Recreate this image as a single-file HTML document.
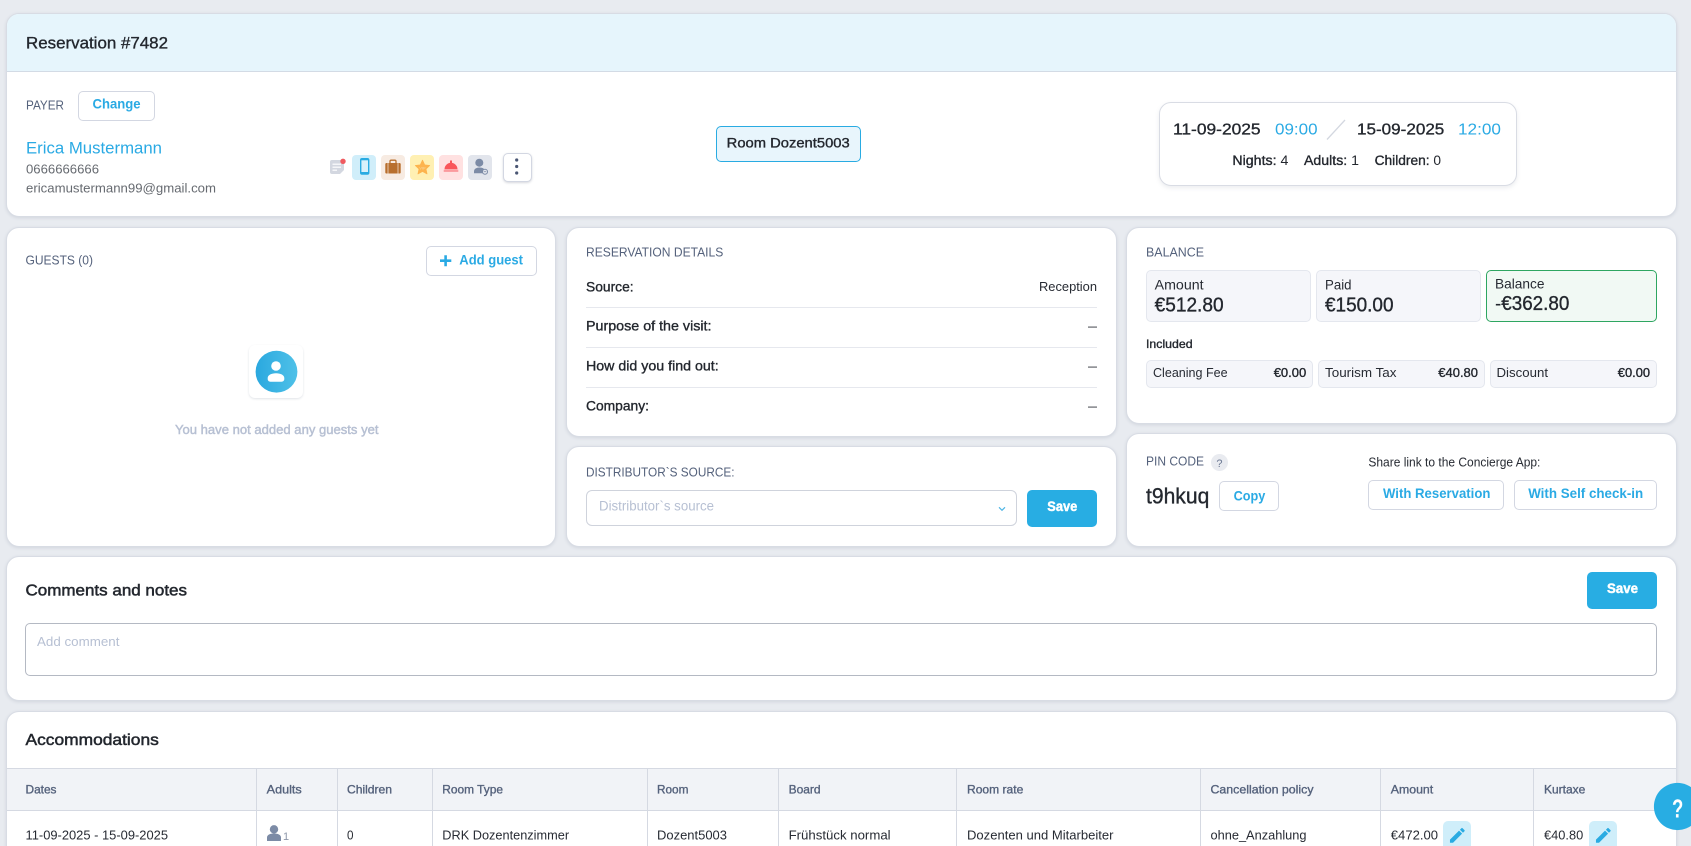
<!DOCTYPE html>
<html lang="en">
<head>
<meta charset="utf-8">
<title>Reservation #7482</title>
<style>
html,body{margin:0;padding:0;width:1691px;height:846px;overflow:hidden;background:#e8ebf0}
body{position:relative;font-family:"Liberation Sans",sans-serif}
.a{position:absolute;box-sizing:border-box}
.card{background:#fff;border:1px solid #d8dce4;border-radius:13px;box-shadow:0 1px 3px rgba(120,130,150,.2)}
.btn{background:#fff;border:1px solid #d3d7e2;border-radius:5px}
.save{background:#28ade3;border-radius:5px}
.stat{background:#f5f6fa;border:1px solid #e4e7ee;border-radius:5px}
.line{background:#e6e8ee;height:1px}
.tile{border-radius:4px}
svg{position:absolute;left:0;top:0}
text{font-family:"Liberation Sans",sans-serif}
.d{fill:#272b33}.dm{fill:#23272e;stroke:#23272e;stroke-width:.35}
.g{fill:#55627c}.gm{fill:#55627c;stroke:#55627c;stroke-width:.35}
.k{fill:#666a70}
.b{fill:#2aaae4}.bm{fill:#2aaae4;stroke:#2aaae4;stroke-width:.45}
.p{fill:#b7c0d3}.pm{fill:#b7c0d3;stroke:#b7c0d3;stroke-width:.45}
.w{fill:#fff;stroke:#fff;stroke-width:.45}
.r{stroke:none;font-weight:400}
</style>
</head>
<body>
<!-- header card -->
<div class="a card" style="left:6px;top:13px;width:1671px;height:204px;overflow:hidden">
  <div class="a" style="left:0;top:0;right:0;height:58px;background:#e6f5fc;border-bottom:1px solid #d3dbe5"></div>
</div>
<div class="a btn" style="left:78px;top:91px;width:77px;height:30px"></div>
<div class="a tile" style="left:352px;top:154.5px;width:24px;height:25px;background:#d0eefa"></div>
<div class="a tile" style="left:381px;top:154.5px;width:24px;height:25px;background:#f7ebe2"></div>
<div class="a tile" style="left:410px;top:154.5px;width:24px;height:25px;background:#fff0b3"></div>
<div class="a tile" style="left:439px;top:154.5px;width:24px;height:25px;background:#ffe1e1"></div>
<div class="a tile" style="left:468px;top:154.5px;width:24px;height:25px;background:#e2e5ec"></div>
<div class="a btn" style="left:502.5px;top:152.5px;width:29px;height:29px;box-shadow:0 1px 2px rgba(90,100,120,.25)"></div>
<div class="a" style="left:716px;top:126px;width:145px;height:36px;background:#e8f5fc;border:1px solid #29abe2;border-radius:5px"></div>
<div class="a" style="left:1158.5px;top:102px;width:358px;height:84px;background:#fff;border:1px solid #d9dce4;border-radius:12px;box-shadow:0 2px 4px rgba(120,130,150,.14)"></div>

<!-- guests -->
<div class="a card" style="left:6px;top:227px;width:550px;height:320px"></div>
<div class="a btn" style="left:426px;top:246px;width:111px;height:30px"></div>
<div class="a" style="left:249px;top:345px;width:54px;height:53px;background:#fff;border-radius:6px;box-shadow:0 1px 2px rgba(120,130,150,.22)"></div>

<!-- details -->
<div class="a card" style="left:566px;top:227px;width:551px;height:210px"></div>
<div class="a line" style="left:586px;top:307px;width:511px"></div>
<div class="a line" style="left:586px;top:347px;width:511px"></div>
<div class="a line" style="left:586px;top:387px;width:511px"></div>

<!-- distributor -->
<div class="a card" style="left:566px;top:446px;width:551px;height:101px"></div>
<div class="a" style="left:586px;top:490px;width:431px;height:36px;background:#fff;border:1px solid #cfd3dc;border-radius:6px"></div>
<div class="a save" style="left:1027px;top:490px;width:70px;height:37px"></div>

<!-- balance -->
<div class="a card" style="left:1126px;top:227px;width:551px;height:197px"></div>
<div class="a stat" style="left:1146px;top:270px;width:165px;height:52px"></div>
<div class="a stat" style="left:1316px;top:270px;width:165px;height:52px"></div>
<div class="a" style="left:1486px;top:270px;width:171px;height:52px;background:#f1f9f4;border:1px solid #2ea661;border-radius:5px"></div>
<div class="a stat" style="left:1146px;top:360px;width:167px;height:28px"></div>
<div class="a stat" style="left:1318px;top:360px;width:167px;height:28px"></div>
<div class="a stat" style="left:1490px;top:360px;width:167px;height:28px"></div>

<!-- pin -->
<div class="a card" style="left:1126px;top:433px;width:551px;height:114px"></div>
<div class="a" style="left:1211px;top:454px;width:17px;height:17px;border-radius:50%;background:#e9ebf0"></div>
<div class="a btn" style="left:1219px;top:481px;width:60px;height:30px"></div>
<div class="a btn" style="left:1368px;top:480px;width:136px;height:30px"></div>
<div class="a btn" style="left:1514px;top:480px;width:143px;height:30px"></div>

<!-- comments -->
<div class="a card" style="left:6px;top:556px;width:1671px;height:145px"></div>
<div class="a save" style="left:1587px;top:572px;width:70px;height:37px"></div>
<div class="a" style="left:25px;top:623px;width:1632px;height:53px;background:#fff;border:1px solid #b4b9c3;border-radius:5px"></div>

<!-- accommodations -->
<div class="a card" style="left:6px;top:711px;width:1671px;height:151px;overflow:hidden">
  <div class="a" style="left:0;top:56px;right:0;height:43px;background:#f1f3f7;border-top:1px solid #d5d9e2;border-bottom:1px solid #d5d9e2"></div>
</div>
<div class="a" style="left:256px;top:768px;width:1px;height:78px;background:#d5d9e2"></div>
<div class="a" style="left:337px;top:768px;width:1px;height:78px;background:#d5d9e2"></div>
<div class="a" style="left:432px;top:768px;width:1px;height:78px;background:#d5d9e2"></div>
<div class="a" style="left:647px;top:768px;width:1px;height:78px;background:#d5d9e2"></div>
<div class="a" style="left:778px;top:768px;width:1px;height:78px;background:#d5d9e2"></div>
<div class="a" style="left:956px;top:768px;width:1px;height:78px;background:#d5d9e2"></div>
<div class="a" style="left:1200px;top:768px;width:1px;height:78px;background:#d5d9e2"></div>
<div class="a" style="left:1380px;top:768px;width:1px;height:78px;background:#d5d9e2"></div>
<div class="a" style="left:1533px;top:768px;width:1px;height:78px;background:#d5d9e2"></div>
<div class="a" style="left:1443px;top:821px;width:28px;height:30px;background:#cfeefa;border-radius:5px"></div>
<div class="a" style="left:1589px;top:821px;width:28px;height:30px;background:#cfeefa;border-radius:5px"></div>

<svg width="1691" height="846" viewBox="0 0 1691 846" xmlns="http://www.w3.org/2000/svg">
<defs>
<linearGradient id="av" x1="0" y1="0" x2="1" y2="0"><stop offset="0" stop-color="#2aa8df"/><stop offset="1" stop-color="#4fc1e8"/></linearGradient>
</defs>
<!-- header text -->
<text x="26" y="48.5" font-size="16.5" class="dm" textLength="142" lengthAdjust="spacingAndGlyphs">Reservation #7482</text>
<text x="26" y="109.5" font-size="13" class="g" textLength="38" lengthAdjust="spacingAndGlyphs">PAYER</text>
<text x="92.5" y="108.7" font-size="14" font-weight="700" class="b" textLength="48" lengthAdjust="spacingAndGlyphs">Change</text>
<text x="26" y="153.7" font-size="17" class="b" textLength="136" lengthAdjust="spacingAndGlyphs">Erica Mustermann</text>
<text x="26" y="173.3" font-size="13" class="k" textLength="73" lengthAdjust="spacingAndGlyphs">0666666666</text>
<text x="26" y="192.3" font-size="13" class="k" textLength="190" lengthAdjust="spacingAndGlyphs">ericamustermann99@gmail.com</text>

<!-- status icons -->
<path d="M332 160h10a2 2 0 0 1 2 2v8l-4 4h-8a2 2 0 0 1-2-2v-10a2 2 0 0 1 2-2z" fill="#d3d7e0"/>
<path d="M332.5 164.2h8.5M332.5 167.2h8.5M332.5 170.2h4.5" stroke="#fff" stroke-width="1.1" fill="none"/>
<circle cx="343" cy="161.3" r="2.7" fill="#ef5a5f"/>
<rect x="360.7" y="158.7" width="8" height="15.3" rx="1.3" fill="#d8f1fb" stroke="#29abe2" stroke-width="1.4"/>
<rect x="360.7" y="172" width="8" height="2" fill="#29abe2"/>
<rect x="360.7" y="158.7" width="8" height="1.6" fill="#29abe2"/>
<path d="M390 163v-1.6a1.2 1.2 0 0 1 1.2-1.2h3.6a1.2 1.2 0 0 1 1.2 1.2v1.6" fill="none" stroke="#b86f2e" stroke-width="1.3"/>
<rect x="385.3" y="163" width="15.4" height="10.5" rx="1.3" fill="#b86f2e"/>
<path d="M388 163v10.5M398 163v10.5" stroke="#f7ebe2" stroke-width=".7"/>
<path d="M422.5 160.2l2.2 4.7 5 .6-3.7 3.4 1 5-4.5-2.5-4.5 2.5 1-5-3.7-3.4 5-.6z" fill="#fdb44e" stroke="#fdb44e" stroke-width=".8" stroke-linejoin="round"/>
<text x="422.5" y="169.5" font-size="4" text-anchor="middle" fill="#f9d08a" font-weight="700">VIP</text>
<path d="M444.5 169.3a6.5 6.5 0 0 1 13 0z" fill="#f9575b"/>
<rect x="450" y="160.5" width="2" height="3" fill="#f9575b"/>
<rect x="443.7" y="169.7" width="14.6" height="2.2" fill="#fb9a9d"/>
<circle cx="479.3" cy="162.7" r="4" fill="#7c8ba6"/>
<path d="M474 173.3v-2c0-2.4 2.5-3.8 5.3-3.8 1.8 0 3.3.4 4.5 1.2v4.6z" fill="#7c8ba6"/>
<circle cx="485" cy="171.7" r="2.5" fill="#e2e5ec" stroke="#7c8ba6" stroke-width="1"/>
<path d="M483.8 171.7h2.4" stroke="#7c8ba6" stroke-width=".7"/>
<circle cx="516.7" cy="160" r="1.6" fill="#4a5673"/>
<circle cx="516.7" cy="166.5" r="1.6" fill="#4a5673"/>
<circle cx="516.7" cy="173" r="1.6" fill="#4a5673"/>

<text x="726.7" y="147.7" font-size="14" class="dm" textLength="123" lengthAdjust="spacingAndGlyphs">Room Dozent5003</text>
<text x="1173" y="134.7" font-size="16" class="dm" textLength="87.6" lengthAdjust="spacingAndGlyphs">11-09-2025</text>
<text x="1275" y="134.7" font-size="16" class="b" textLength="42.6" lengthAdjust="spacingAndGlyphs">09:00</text>
<path d="M1345 120L1327 139.5" stroke="#d3d7e0" stroke-width="1.3"/>
<text x="1357" y="134.7" font-size="16" class="dm" textLength="87.3" lengthAdjust="spacingAndGlyphs">15-09-2025</text>
<text x="1458" y="134.7" font-size="16" class="b" textLength="43" lengthAdjust="spacingAndGlyphs">12:00</text>
<text x="1232.4" y="165" font-size="13.5" class="dm" textLength="56" lengthAdjust="spacingAndGlyphs">Nights: <tspan class="r">4</tspan></text>
<text x="1304" y="165" font-size="13.5" class="dm" textLength="55" lengthAdjust="spacingAndGlyphs">Adults: <tspan class="r">1</tspan></text>
<text x="1374.6" y="165" font-size="13.5" class="dm" textLength="66.4" lengthAdjust="spacingAndGlyphs">Children: <tspan class="r">0</tspan></text>

<!-- guests -->
<text x="25.5" y="264.5" font-size="13" class="g" textLength="67.5" lengthAdjust="spacingAndGlyphs">GUESTS (0)</text>
<path d="M445.6 255.2v11M440 260.7h11.3" stroke="#2aaae4" stroke-width="2.6"/>
<text x="459.3" y="264.5" font-size="14" font-weight="700" class="b" textLength="63.7" lengthAdjust="spacingAndGlyphs">Add guest</text>
<circle cx="276.5" cy="371.7" r="20.9" fill="url(#av)"/>
<circle cx="276" cy="366" r="4.8" fill="#fff"/>
<path d="M267.7 379v-1c0-2.8 3.7-4.7 8.3-4.7s8.3 1.9 8.3 4.7v1c0 1.6-1.2 2.7-2.7 2.7h-11.2c-1.500 0-2.700-1.100-2.700-2.700z" fill="#fff"/>
<text x="175" y="434" font-size="13" class="pm" textLength="203.5" lengthAdjust="spacingAndGlyphs">You have not added any guests yet</text>

<!-- details -->
<text x="586" y="256.5" font-size="13" class="g" textLength="137.3" lengthAdjust="spacingAndGlyphs">RESERVATION DETAILS</text>
<text x="586" y="291.5" font-size="14" class="dm" textLength="47.6" lengthAdjust="spacingAndGlyphs">Source:</text>
<text x="1039" y="291" font-size="13" class="d" textLength="58" lengthAdjust="spacingAndGlyphs">Reception</text>
<text x="586" y="330.5" font-size="14" class="dm" textLength="125.500" lengthAdjust="spacingAndGlyphs">Purpose of the visit:</text>
<text x="1088" y="330.7" font-size="13" class="d" textLength="9" lengthAdjust="spacingAndGlyphs">—</text>
<text x="586" y="370.7" font-size="14" class="dm" textLength="132.7" lengthAdjust="spacingAndGlyphs">How did you find out:</text>
<text x="1088" y="370.7" font-size="13" class="d" textLength="9" lengthAdjust="spacingAndGlyphs">—</text>
<text x="586" y="410.5" font-size="14" class="dm" textLength="63" lengthAdjust="spacingAndGlyphs">Company:</text>
<text x="1088" y="410.7" font-size="13" class="d" textLength="9" lengthAdjust="spacingAndGlyphs">—</text>

<!-- distributor -->
<text x="586" y="476.5" font-size="13" class="g" textLength="148.500" lengthAdjust="spacingAndGlyphs">DISTRIBUTOR`S SOURCE:</text>
<text x="599" y="510.7" font-size="13.5" class="p" textLength="115" lengthAdjust="spacingAndGlyphs">Distributor`s source</text>
<path d="M999 507.3l3 3 3-3" stroke="#4db5e4" stroke-width="1.2" fill="none"/>
<text x="1047.3" y="511" font-size="14" font-weight="700" class="w" textLength="30" lengthAdjust="spacingAndGlyphs">Save</text>

<!-- balance -->
<text x="1146" y="256.5" font-size="13" class="g" textLength="58" lengthAdjust="spacingAndGlyphs">BALANCE</text>
<text x="1154.6" y="289.5" font-size="14" class="d" textLength="49" lengthAdjust="spacingAndGlyphs">Amount</text>
<text x="1154.6" y="311.3" font-size="20" class="dm" textLength="69" lengthAdjust="spacingAndGlyphs">€512.80</text>
<text x="1325" y="289.5" font-size="14" class="d" textLength="26.5" lengthAdjust="spacingAndGlyphs">Paid</text>
<text x="1325" y="311.3" font-size="20" class="dm" textLength="68.5" lengthAdjust="spacingAndGlyphs">€150.00</text>
<text x="1495" y="288.5" font-size="14" class="d" textLength="49.5" lengthAdjust="spacingAndGlyphs">Balance</text>
<text x="1495" y="310" font-size="20" class="dm" textLength="74.3" lengthAdjust="spacingAndGlyphs"><tspan class="r">-</tspan>€362.80</text>
<text x="1146" y="348" font-size="12" class="dm" textLength="46.6" lengthAdjust="spacingAndGlyphs">Included</text>
<text x="1153" y="377" font-size="13" class="d" textLength="74.6" lengthAdjust="spacingAndGlyphs">Cleaning Fee</text>
<text x="1273.7" y="377" font-size="13" class="dm" textLength="32.6" lengthAdjust="spacingAndGlyphs">€0.00</text>
<text x="1325" y="377" font-size="13" class="d" textLength="71.5" lengthAdjust="spacingAndGlyphs">Tourism Tax</text>
<text x="1438.3" y="377" font-size="13" class="dm" textLength="39.7" lengthAdjust="spacingAndGlyphs">€40.80</text>
<text x="1496.5" y="377" font-size="13" class="d" textLength="51.5" lengthAdjust="spacingAndGlyphs">Discount</text>
<text x="1617.8" y="377" font-size="13" class="dm" textLength="32.3" lengthAdjust="spacingAndGlyphs">€0.00</text>

<!-- pin -->
<text x="1146" y="465.5" font-size="13" class="g" textLength="58" lengthAdjust="spacingAndGlyphs">PIN CODE</text>
<text x="1219.4" y="467" font-size="11" fill="#6d7a94" text-anchor="middle">?</text>
<text x="1146" y="503.3" font-size="22" class="dm" textLength="63.3" lengthAdjust="spacingAndGlyphs">t9hkuq</text>
<text x="1233.6" y="500.7" font-size="14" font-weight="700" class="b" textLength="31.7" lengthAdjust="spacingAndGlyphs">Copy</text>
<text x="1368.4" y="466.5" font-size="12.5" class="d" textLength="172" lengthAdjust="spacingAndGlyphs">Share link to the Concierge App:</text>
<text x="1383" y="498" font-size="14" font-weight="700" class="b" textLength="107.4" lengthAdjust="spacingAndGlyphs">With Reservation</text>
<text x="1528.2" y="498" font-size="14" font-weight="700" class="b" textLength="115" lengthAdjust="spacingAndGlyphs">With Self check-in</text>

<!-- comments -->
<text x="25.5" y="595.7" font-size="16" class="dm" textLength="161.5" lengthAdjust="spacingAndGlyphs" style="stroke-width:.5">Comments and notes</text>
<text x="1607" y="593" font-size="14" font-weight="700" class="w" textLength="31" lengthAdjust="spacingAndGlyphs">Save</text>
<text x="37" y="646" font-size="13" class="p" textLength="82.4" lengthAdjust="spacingAndGlyphs">Add comment</text>

<!-- accommodations -->
<text x="25.5" y="745" font-size="16" class="dm" textLength="133.3" lengthAdjust="spacingAndGlyphs" style="stroke-width:.5">Accommodations</text>
<text x="25.5" y="793.5" font-size="12" class="gm" textLength="31" lengthAdjust="spacingAndGlyphs">Dates</text>
<text x="266.7" y="793.5" font-size="12" class="gm" textLength="35" lengthAdjust="spacingAndGlyphs">Adults</text>
<text x="347" y="793.5" font-size="12" class="gm" textLength="45" lengthAdjust="spacingAndGlyphs">Children</text>
<text x="442.3" y="793.5" font-size="12" class="gm" textLength="60.7" lengthAdjust="spacingAndGlyphs">Room Type</text>
<text x="657" y="793.5" font-size="12" class="gm" textLength="31.4" lengthAdjust="spacingAndGlyphs">Room</text>
<text x="788.6" y="793.5" font-size="12" class="gm" textLength="32" lengthAdjust="spacingAndGlyphs">Board</text>
<text x="967" y="793.5" font-size="12" class="gm" textLength="56.3" lengthAdjust="spacingAndGlyphs">Room rate</text>
<text x="1210.5" y="793.5" font-size="12" class="gm" textLength="103" lengthAdjust="spacingAndGlyphs">Cancellation policy</text>
<text x="1390.8" y="793.5" font-size="12" class="gm" textLength="42.4" lengthAdjust="spacingAndGlyphs">Amount</text>
<text x="1544" y="793.5" font-size="12" class="gm" textLength="41.3" lengthAdjust="spacingAndGlyphs">Kurtaxe</text>

<text x="25.5" y="839.3" font-size="13" class="d" textLength="142.5" lengthAdjust="spacingAndGlyphs">11-09-2025 - 15-09-2025</text>
<circle cx="274" cy="829.3" r="4.2" fill="#7c8ba6"/>
<path d="M267 841v-3.5c0-2.8 3.2-4 7-4s7 1.2 7 4v3.5z" fill="#7c8ba6"/>
<text x="283" y="840" font-size="11" fill="#8d97a9">1</text>
<text x="347" y="839.3" font-size="13" class="d" textLength="6.5" lengthAdjust="spacingAndGlyphs">0</text>
<text x="442.3" y="839.3" font-size="13" class="d" textLength="126.8" lengthAdjust="spacingAndGlyphs">DRK Dozentenzimmer</text>
<text x="657" y="839.3" font-size="13" class="d" textLength="70" lengthAdjust="spacingAndGlyphs">Dozent5003</text>
<text x="788.6" y="839.3" font-size="13" class="d" textLength="102" lengthAdjust="spacingAndGlyphs">Frühstück normal</text>
<text x="967" y="839.3" font-size="13" class="d" textLength="146.500" lengthAdjust="spacingAndGlyphs">Dozenten und Mitarbeiter</text>
<text x="1210.5" y="839.3" font-size="13" class="d" textLength="96" lengthAdjust="spacingAndGlyphs">ohne_Anzahlung</text>
<text x="1390.8" y="839.3" font-size="13" class="d" textLength="47.2" lengthAdjust="spacingAndGlyphs">€472.00</text>
<text x="1544" y="839.3" font-size="13" class="d" textLength="39.2" lengthAdjust="spacingAndGlyphs">€40.80</text>
<g transform="translate(1447.5 825.5) scale(.82)" fill="#29abe2"><path d="M3 17.25V21h3.75L17.81 9.94l-3.75-3.75L3 17.25zM20.71 7.04a1 1 0 0 0 0-1.41l-2.34-2.34a1 1 0 0 0-1.41 0l-1.83 1.83 3.75 3.75 1.83-1.83z"/></g>
<g transform="translate(1593.5 825.5) scale(.82)" fill="#29abe2"><path d="M3 17.25V21h3.75L17.81 9.94l-3.75-3.75L3 17.25zM20.71 7.04a1 1 0 0 0 0-1.41l-2.34-2.34a1 1 0 0 0-1.41 0l-1.83 1.83 3.75 3.75 1.83-1.83z"/></g>

<!-- help bubble -->
<circle cx="1677.5" cy="806.5" r="23.6" fill="#28ade3"/>
<text x="1672" y="817.7" font-size="26" font-weight="700" fill="#fff" textLength="11.3" lengthAdjust="spacingAndGlyphs">?</text>
</svg>
</body>
</html>
